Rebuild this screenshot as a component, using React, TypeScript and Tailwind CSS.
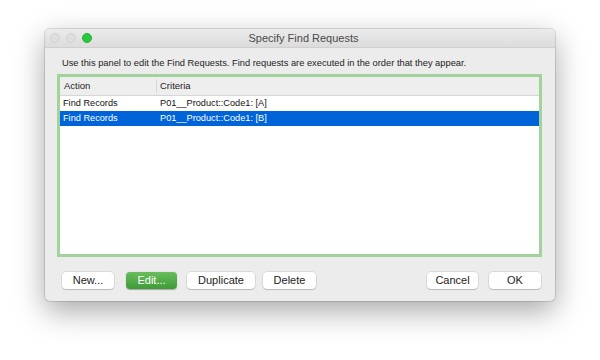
import React from "react";

const font = { fontFamily: '"Liberation Sans", Arial, sans-serif' };

type Row = { action: string; criteria: string; selected?: boolean };

const rows: Row[] = [
  { action: "Find Records", criteria: "P01__Product::Code1: [A]" },
  { action: "Find Records", criteria: "P01__Product::Code1: [B]", selected: true },
];

const Btn = ({ label, w, primary }: { label: string; w: string; primary?: boolean }) => {
  return (
    <button
      className={`${w} h-[17px] rounded-[4px] text-[11px] leading-[17px] text-center ${
        primary
          ? "bg-gradient-to-b from-[#68bd5c] to-[#3f9a37] text-white shadow-[0_0.5px_1px_rgba(0,0,0,0.3)]"
          : "bg-white text-[#222] shadow-[0_0_0_0.5px_rgba(0,0,0,0.15),0_1px_1px_rgba(0,0,0,0.15)]"
      }`}
    >
      {label}
    </button>
  );
};

export default function App() {
  return (
    <div className="w-[600px] h-[360px] bg-white pt-[29px] pl-[45px]" style={font}>
      <div className="w-[510px] h-[272px] rounded-[5px] bg-[#ececec] flex flex-col overflow-hidden shadow-[0_10px_30px_rgba(0,0,0,0.35),0_0_0_1px_rgba(0,0,0,0.12)]">
        {/* title bar */}
        <div className="h-[19px] bg-gradient-to-b from-[#ebebeb] to-[#dcdcdc] border-b border-[#cfcfcf] flex items-center shrink-0">
          <div className="flex gap-[6px] pl-[5px]">
            <span className="w-[10px] h-[10px] rounded-full bg-[#dedede] border border-[#d0d0d0]" />
            <span className="w-[10px] h-[10px] rounded-full bg-[#dedede] border border-[#d0d0d0]" />
            <span className="w-[10px] h-[10px] rounded-full bg-[#28c840] border border-[#22b034]" />
          </div>
          <div className="flex-1 text-center text-[11px] text-[#4a4a4a] pr-[40px] pt-[1px]">Specify Find Requests</div>
        </div>

        <div className="flex-1 flex flex-col pl-[12px] pr-[13px] pt-[9px] pb-[12px]">
          <p className="text-[9.3px] text-[#222] pl-[5px] leading-[12px]">
            Use this panel to edit the Find Requests. Find requests are executed in the order that they appear.
          </p>

          <div className="mt-[5px] h-[183px] border-[3px] border-[#a3d39c] bg-white flex flex-col">
            <div className="h-[19px] bg-[#eeeeee] border-b border-[#d6d6d6] flex text-[9.5px] text-[#222] items-center shrink-0">
              <div className="w-[97px] pl-[4px] border-r border-[#d9d9d9] h-[14px] leading-[14px]">Action</div>
              <div className="pl-[3px]">Criteria</div>
            </div>
            {rows.map((r) => (
              <div
                key={r.criteria}
                className={`h-[15px] flex items-center text-[9.2px] ${
                  r.selected ? "bg-[#0064d8] text-white" : "bg-white text-[#111]"
                }`}
              >
                <div className="w-[97px] pl-[3px]">{r.action}</div>
                <div className="pl-[3px]">{r.criteria}</div>
              </div>
            ))}
          </div>

          <div className="mt-auto flex items-center pl-[5px]">
            <Btn label="New..." w="w-[52px]" />
            <div className="w-[12px]" />
            <Btn label="Edit..." w="w-[51px]" primary />
            <div className="w-[10px]" />
            <Btn label="Duplicate" w="w-[68px]" />
            <div className="w-[8px]" />
            <Btn label="Delete" w="w-[53px]" />
            <div className="flex-1" />
            <Btn label="Cancel" w="w-[51px]" />
            <div className="w-[11px]" />
            <Btn label="OK" w="w-[52px]" />
            <div className="w-[1px]" />
          </div>
        </div>
      </div>
    </div>
  );
}
